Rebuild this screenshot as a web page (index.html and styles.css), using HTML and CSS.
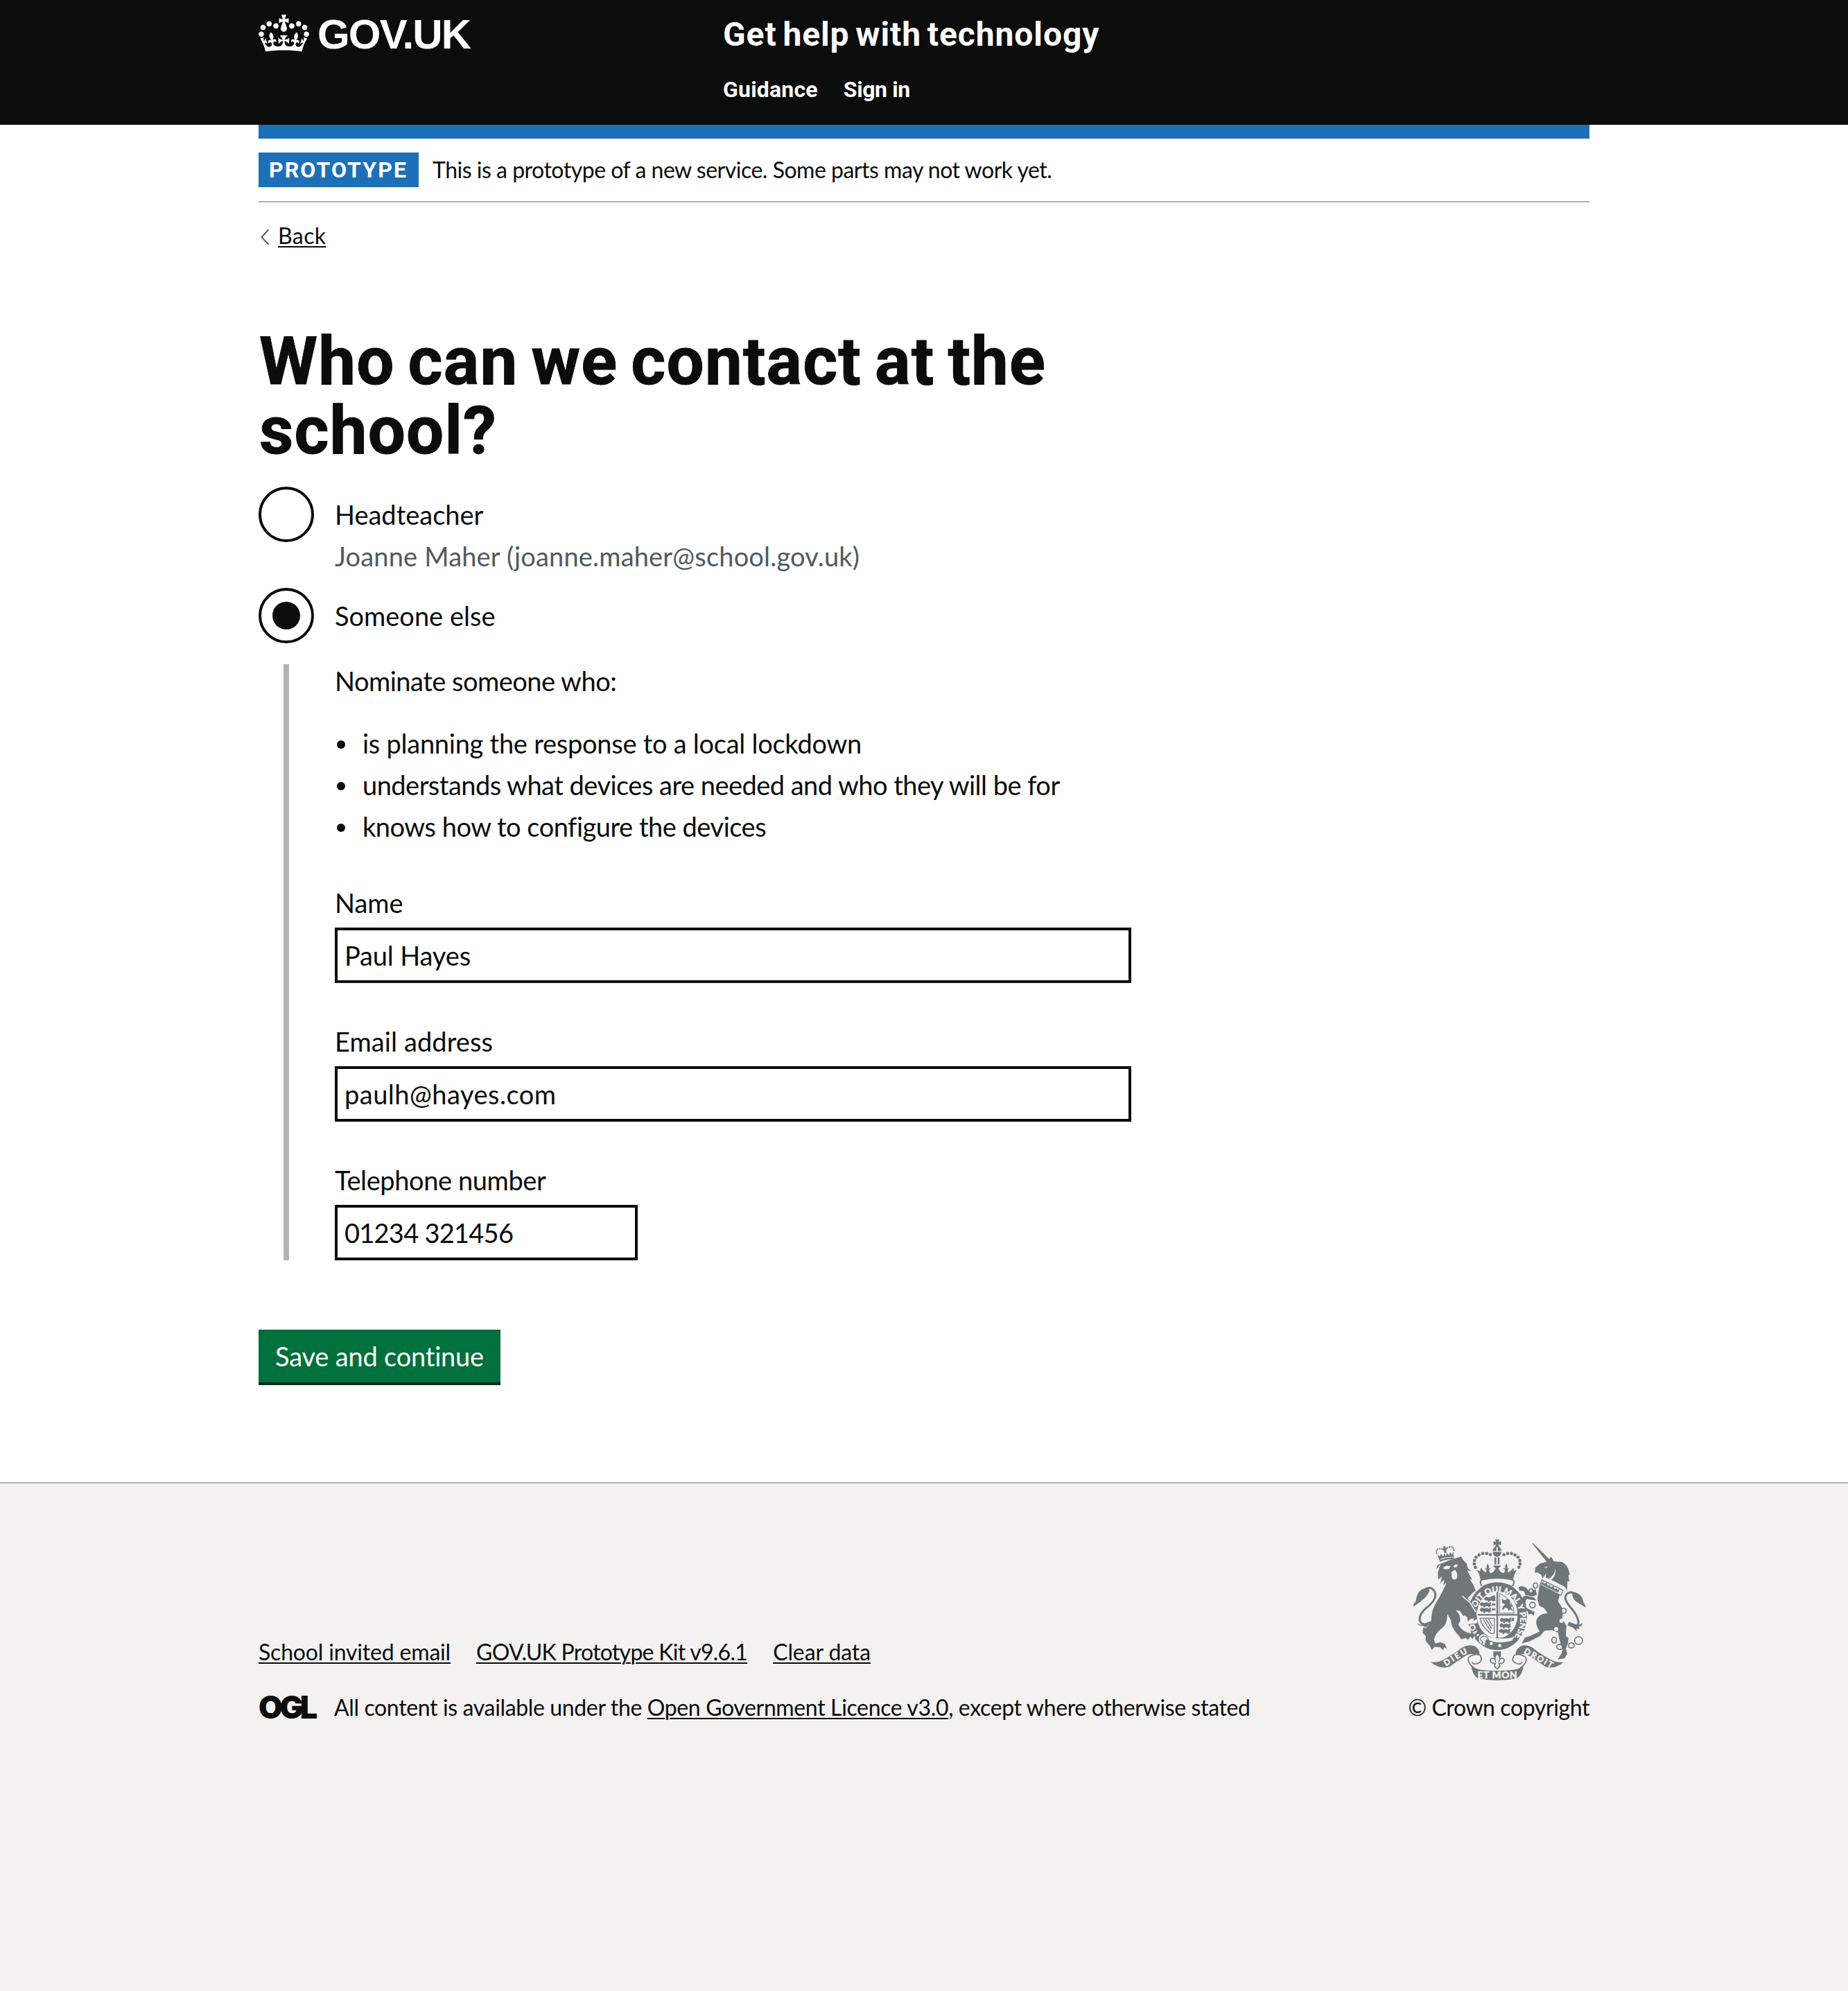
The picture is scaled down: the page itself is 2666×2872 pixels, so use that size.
FILE: index.html
```html
<!DOCTYPE html>
<html lang="en">
<head>
<meta charset="utf-8">
<title>Who can we contact at the school? - Get help with technology</title>
<link rel="stylesheet" href="styles.css">
</head>
<body>
<header class="header">
  <div class="container header-inner">
    <a class="logo" href="#">
      <svg class="logo-crown" viewBox="0 0 132 97" aria-hidden="true"><path fill="currentColor" fill-rule="evenodd" d="M25 30.2c3.5 1.5 7.7-.2 9.1-3.7 1.5-3.6-.2-7.8-3.9-9.2-3.6-1.4-7.6.3-9.1 3.9-1.4 3.5.3 7.5 3.9 9zM9 39.5c3.6 1.5 7.8-.2 9.2-3.7 1.5-3.6-.2-7.8-3.9-9.1-3.6-1.5-7.6.2-9.1 3.8-1.4 3.5.3 7.5 3.8 9zM4.4 57.2c3.5 1.5 7.7-.2 9.1-3.8 1.5-3.6-.2-7.7-3.9-9.1-3.5-1.5-7.6.3-9.1 3.8-1.4 3.5.3 7.6 3.9 9.1zm38.3-21.4c3.5 1.5 7.7-.2 9.1-3.8 1.5-3.6-.2-7.7-3.9-9.1-3.6-1.5-7.6.3-9.1 3.8-1.3 3.6.4 7.7 3.9 9.1zm64.4-5.6c-3.6 1.5-7.8-.2-9.1-3.7-1.5-3.6.2-7.8 3.8-9.2 3.6-1.4 7.7.3 9.2 3.9 1.3 3.5-.4 7.5-3.9 9zm15.9 9.3c-3.6 1.5-7.7-.2-9.1-3.7-1.5-3.6.2-7.8 3.7-9.1 3.6-1.5 7.7.2 9.2 3.8 1.5 3.5-.3 7.5-3.8 9zm4.7 17.7c-3.6 1.5-7.8-.2-9.2-3.8-1.5-3.6.2-7.7 3.9-9.1 3.6-1.5 7.7.3 9.2 3.8 1.3 3.5-.4 7.6-3.9 9.1zM89.3 35.8c-3.6 1.5-7.8-.2-9.2-3.8-1.4-3.6.2-7.7 3.9-9.1 3.6-1.5 7.7.3 9.2 3.8 1.4 3.6-.3 7.7-3.9 9.1zM69.7 17.7l8.9 4.7V9.3l-8.9 2.8c-.2-.3-.5-.6-.9-.9L72.4 0H59.6l3.5 11.2c-.3.3-.6.5-.9.9l-8.8-2.8v13.1l8.8-4.7c.3.3.6.7.9.9l-5 15.4v.1c-.2.8-.4 1.6-.4 2.4 0 4.1 3.1 7.5 7 8.1h.2c.3 0 .7.1 1 .1.4 0 .7 0 1-.1h.2c4-.6 7.1-4.1 7.1-8.1 0-.8-.1-1.7-.4-2.4V34l-5.1-15.4c.4-.2.7-.6 1-.9zM66 92.8c16.9 0 32.8 1.1 47.1 3.2 4-16.9 8.9-26.7 14-33.5l-9.6-3.4c1 4.9 1.1 7.2 0 10.2-1.5-1.4-3-4.3-4.2-8.7L108.6 76c2.8-2 5-3.2 7.5-3.3-4.4 9.4-10 11.9-13.6 11.2-4.3-.8-6.3-4.6-5.6-7.9 1-4.7 5.7-5.9 8-.5 4.3-8.7-3-11.4-7.6-8.8 7.1-7.2 7.9-13.5 2.1-21.1-8 6.1-8.1 12.3-4.5 20.8-4.7-5.4-12.1-2.5-9.5 6.2 3.4-5.2 7.9-2 7.2 3.1-.6 4.3-6.4 7.8-13.5 7.2-10.3-.9-10.9-8-11.2-13.8 2.5-.5 7.1 1.8 11 7.3L80.2 60c-4.1 4.4-8 5.3-12.3 5.4 1.4-4.4 8-11.6 8-11.6H55.5s6.4 7.2 7.9 11.6c-4.2-.1-8-1-12.3-5.4l1.4 16.4c3.9-5.5 8.5-7.7 10.9-7.3-.3 5.8-.9 12.8-11.1 13.8-7.2.6-12.9-2.9-13.5-7.2-.7-5 3.8-8.3 7.1-3.1 2.7-8.7-4.6-11.6-9.4-6.2 3.7-8.5 3.6-14.7-4.6-20.8-5.8 7.6-5 13.9 2.2 21.1-4.7-2.6-11.9.1-7.7 8.8 2.3-5.5 7.1-4.2 8.1.5.7 3.3-1.3 7.1-5.7 7.9-3.5.7-9-1.8-13.5-11.2 2.5.1 4.7 1.3 7.5 3.3l-4.7-15.4c-1.2 4.4-2.7 7.2-4.3 8.7-1.1-3-.9-5.3 0-10.2l-9.5 3.4c5 6.9 9.9 16.7 14 33.5 14.8-2.1 30.8-3.2 47.7-3.2z"/></svg>
      <span class="logo-text">GOV.UK</span>
    </a>
    <div class="header-content">
      <a class="service-name" href="#">Get help with technology</a>
      <nav class="nav">
        <a class="nav-guidance" href="#">Guidance</a>
        <a class="nav-signin" href="#">Sign in</a>
      </nav>
    </div>
  </div>
</header>

<div class="container">
  <div class="blue-bar"></div>
  <div class="phase">
    <strong class="tag">Prototype</strong>
    <span class="phase-text">This is a prototype of a new service. Some parts may not work yet.</span>
  </div>
  <a class="back" href="#">
    <svg class="back-arrow" viewBox="0 0 16 24" aria-hidden="true"><path d="M14.500 1.200 4.500 12l10 10.800" fill="none" stroke="#505a5f" stroke-width="1.900"/></svg>
    <span class="back-text">Back</span>
  </a>

  <main class="main">
    <h1 class="title">Who can we contact at the school?</h1>

    <div class="option option-first">
      <span class="radio"></span>
      <div class="option-body">
        <span class="label ls-head">Headteacher</span>
        <span class="hint">Joanne Maher (joanne.maher@school.gov.uk)</span>
      </div>
    </div>
    <div class="option">
      <span class="radio radio-checked"></span>
      <div class="option-body"><span class="label ls-some">Someone else</span></div>
    </div>

    <div class="conditional">
      <p class="intro">Nominate someone who:</p>
      <ul class="list">
        <li class="ls-plan">is planning the response to a local lockdown</li>
        <li class="ls-under">understands what devices are needed and who they will be for</li>
        <li class="ls-knows">knows how to configure the devices</li>
      </ul>
      <div class="field">
        <label class="label" for="name">Name</label>
        <input class="input ls-paul" id="name" type="text" value="Paul Hayes">
      </div>
      <div class="field">
        <label class="label ls-email" for="email">Email address</label>
        <input class="input ls-paulh" id="email" type="text" value="paulh@hayes.com">
      </div>
      <div class="field">
        <label class="label ls-tel" for="tel">Telephone number</label>
        <input class="input input-short ls-num" id="tel" type="text" value="01234 321456">
      </div>
    </div>

    <button class="button" type="button">Save and continue</button>
  </main>
</div>

<footer class="footer">
  <div class="container footer-inner">
    <div class="footer-meta">
      <div class="footer-links">
        <a class="ls-school" href="#">School invited email</a>
        <a class="ls-kit" href="#">GOV.UK Prototype Kit v9.6.1</a>
        <a class="ls-clear" href="#">Clear data</a>
      </div>
      <div class="licence">
        <span class="ogl">OGL</span>
        <span class="licence-text">All content is available under the <a href="#">Open Government Licence v3.0</a>, except where otherwise stated</span>
      </div>
    </div>
    <div class="crown-copyright">
      <svg class="crest" viewBox="54 58 750 614" aria-hidden="true">
        <defs>
          <path id="garter" d="M346 482A100 115 0 1 1 494 482"/>
          <g id="charge"><path d="M0 8l9-6 8 4 12-3 10 4 5-6 5 3-3 8 5 8-7-1-4 6-7-6-9 1-5 6-5-1 2-7-8 2-8-5z"/></g>
        </defs>
        <!-- royal crown -->
        <g class="ink">
          <path d="M410 60h20l-5 11 11-4v18l-11-4 5 12h-20l5-12-11 4V67l11 4zM400 110q1-16 16-18v18zM422 92q15 2 16 18h-16zM400 114h38q-2 20-19 22-17-2-19-22zM408 138h8v30h-8zm14 0h8v30h-8z"/>
          <path d="M330 192l16 6 2-16 10 12 12 10q8-12-4-18 6-4 8 2-2-14 4-24 8 10 5 24 4-6 9-1-12 4-4 18 12 2 20-10l-5-22h32l-5 22q8 12 20 10 8-14-4-18 5-5 9 1-3-14 5-24 6 10 4 24 2-6 8-2-12 6-4 18l12-10 10-12 2 16 14-6q-14 20-18 46-74-18-140 0-4-28-18-46z"/>
          <circle cx="390" cy="126" r="7"/><circle cx="374" cy="121" r="7"/><circle cx="357" cy="121" r="7"/><circle cx="341" cy="127" r="7"/><circle cx="328" cy="137" r="7"/><circle cx="321" cy="151" r="7"/><circle cx="320" cy="166" r="7"/><circle cx="325" cy="181" r="7"/>
          <circle cx="449" cy="126" r="7"/><circle cx="465" cy="121" r="7"/><circle cx="482" cy="121" r="7"/><circle cx="497" cy="127" r="7"/><circle cx="510" cy="137" r="7"/><circle cx="518" cy="151" r="7"/><circle cx="519" cy="166" r="7"/><circle cx="514" cy="181" r="7"/>
        </g>
        <path class="paper" d="M402 176l12 10-12 12zM436 176l-12 10 12 12z"/>
        <!-- garter and shield -->
        <ellipse class="ink" cx="420" cy="392" rx="129" ry="148"/>
        <path d="M352 262q-12-24 4-28 64-14 128 0 16 4 2 28-66-26-134 0z" fill="#f3f2f1"/>
        <path class="line" d="M352 262q-12-24 4-28 64-14 128 0 16 4 2 28" stroke-width="6"/>
        <path class="ink" d="M356 262q64-32 128 0l-10 8h-108z"/>
        <ellipse class="paper" cx="420" cy="387" rx="90" ry="104"/>
        <path class="line" d="M420 285v205M330 387h180" stroke-width="7"/>
        <ellipse class="line" cx="420" cy="387" rx="90" ry="104" stroke-width="3"/>
        <g class="ink">
          <use href="#charge" x="364" y="306"/><use href="#charge" x="345" y="330"/><use href="#charge" x="345" y="354"/>
          <use href="#charge" x="432" y="398"/><use href="#charge" x="430" y="422"/><use href="#charge" x="428" y="446"/>
          <path d="M390 308l20-6v14zM396 338h16v8h-16zm0 22h16v8h-16zM482 400h12l-2 14h-10zM412 486h28v10h-28z"/>
          <path d="M440 318l14 6 10-8 12 8-2 14 12 8-6 10 10 12-14-4-6 6-6-12-12-2-4 10-8-4 6-12 8-8-12-6z"/>
        </g>
        <path class="line" d="M429 294v86h64q0-56-64-86" stroke-width="3"/>
        <path class="line" d="M345 402h62v64q-10 8-22-4-36-28-40-60zM358 406l34 52M370 404l26 44M382 404l18 34" stroke-width="4"/>
        <text class="motto" font-size="36"><textPath href="#garter" startOffset="6" textLength="498">HONI SOIT QUI MAL Y PENSE</textPath></text>
        <path class="paper" d="M343 482q14-20 32-4 14 12 80 12 22 0 40-10l-10 18q-40 20-104 4-8 26-26 18l-8-8q-12-16-4-30z"/>
        <path class="ink" d="M372 492q48 26 112 8l-16 26q-46 26-104-4z"/>
        <path class="line" d="M350 486q14-14 28 2 12 14-6 32-14 4-20-6 8-10 0-14-10-4-2-14z" stroke-width="4"/>
        <circle class="paper" cx="394" cy="512" r="7"/><circle class="paper" cx="431" cy="521" r="7"/>
        <!-- lion -->
        <path class="paper" d="M262 300l60 50 14 40-4 34-40 4-50-58z"/>
        <path class="ink" d="M154 190l8-20 22-8 28-12 52-16 8 16 15 14 5 20 15 13-18-3 12 22 10 18-10-2 12 20 14 30-12 8-24 26 34 40 4 26 4 24-16 8 2-12-16 4-10 10-4-18-8-8-8 2-16-22-18-3q22 18 20 46-4 8-8 16 16 32 54 39l6-10 4 10 14 4 4 12-14-4-6 14-8-12-12 14-10-8-20 6-8-14-14-16q-22-26-22-52l-16-30q2 46-26 66-24 18-32 46l6 18 22-6 20 8 9 22-12-8-6 12-12-12-24-2-12 14-8-16-10-12-10-14 2-18-14-14 2-24 10 4 26-26q-4-48 24-92 28-46 42-82l-14 14 4-26-18 16 8-30-16 14-2-30 12-36z"/>
        <path class="paper" d="M184 184l14-10 20 2-8 12-16 2zM228 176l12-8 10 2-6 10-10 2zM222 200l16-8 6 12q6 16-2 28-12 6-18-4-6-12 2-20l-6 2z"/>
        <path d="M268 306l34 28 24 40" fill="none" stroke="#f3f2f1" stroke-width="5"/>
        <path class="line" d="M134 418q-40 22-50-4-6-30 34-62 44-36 30-66-18-28-46-6" stroke-width="9"/>
        <path class="ink" d="M54 352q2-16 12-22 4-42 28-54 26-12 32 4-4 20-28 40-16 16-44 32zM70 424q24 14 46-2l18-8-6 14-24 16q4-10-8-8-16 0-26-12z"/>
        <g transform="rotate(-10 196 124)">
          <path class="ink" d="M160 118l10 12 6-12 8 14 6-12 6 12 6-12 8 12 6-14 6 12 10-12-6 34q-30-8-60 0zM191 90h10v8h6v6h-6v14h-10v-14h-6v-6h6z"/>
          <path class="line" d="M158 116q-2-22 16-20 14 0 20 12M234 116q2-22-16-20-14 0-20 12" stroke-width="6" stroke-dasharray="6 3"/>
          <path d="M170 142q26-6 54 0" fill="none" stroke="#f3f2f1" stroke-width="3"/>
        </g>
        <!-- unicorn -->
        <path class="ink" d="M570 75l6 2 74 72-12 12zM583 204l2-20 20-19 28-8 8-8 14-14 10 20 36 2 18 14 10 18 6 24-6 2 4 28-8-3-2 42-10-16-44-24-40-18 4-18-16 22-6-14-12-8-4-2z"/>
        <path class="paper" d="M622 182l18-4-6 6zM636 236q34-18 36-50 6 36-26 56z"/>
        <path class="ink" d="M604 258l88 40-8 30 16 26 4 30-2 20 18 30-2 46 12 8-4 26-8 20 6 24-12 18-30 6 14-22 8-20-14-44-6-32-26-10-32 2-22 24-42 22-36 10 14-26 20-6 44-20-6-10q-16-30-4-48 12-20 44-22l-14-22-22-10-8-30z"/>
        <path class="ink" d="M592 300l-18 8-30-6-10-18-18-2-4-14 12-6 20 6 20 24 22-18zM590 324l-22-2-20-4-6 14 4 24 20 12 16 6-4 16-10-8-12 4-4-14-12-12-12-28 2-22 14-6 36 8z"/>
        <path d="M614 235l92 46-10 22-90-46z" fill="#f3f2f1" stroke="#6f777b" stroke-width="4"/>
        <path class="ink" transform="translate(611 250) rotate(26.500)" d="M0 0l4-12 5 8 6-2 5-10 5 10 7 2 5-8 5 8 6-2 5-10 5 10 7 2 5-8 5 8 7-10 2 14v4H0z"/>
        <circle class="paper" cx="699" cy="413" r="9"/><circle class="paper" cx="676" cy="449" r="9"/>
        <g class="line" stroke-width="5">
          <ellipse cx="586" cy="260" rx="10" ry="11"/><ellipse cx="567" cy="284" rx="9" ry="10"/><circle cx="573" cy="345" r="12"/><circle cx="708" cy="370" r="11"/><ellipse cx="667" cy="497" rx="10" ry="13"/><ellipse cx="692" cy="526" rx="14" ry="11"/><ellipse cx="742" cy="520" rx="13" ry="11"/><circle cx="773" cy="499" r="17"/>
        </g>
        <path class="line" d="M736 434q40 10 36-20-4-26-36-62-32-36-14-56 18-14 38 2" stroke-width="9"/>
        <path class="ink" d="M804 356q-2-16-10-22-2-30-28-42-16-6-20 6 0 20 20 34 16 10 38 24zM790 422q-14 12-26 8l-32-12-8 14 24 10 18 18-2-14 14 4-4-12 12-2z"/>
        <!-- fleur-de-lis badge and motto scroll -->
        <path class="ink" d="M403 546h33v24h-33z"/>
        <path d="M420 556q18 18 6 36 6-22 22-14 8 10-8 20h-12l4 12-12 12-12-12 4-12h-12q-16-10-8-20 16-8 22 14-12-18 6-36z" fill="#f3f2f1" stroke="#6f777b" stroke-width="5"/>
        <path class="ink" d="M130 592q34 4 60-12 50-28 76-50 30-18 58-6 22 14 18 40l-30-6q-20-2-40 14-34 22-58 40-40 14-84-20z"/>
        <path class="ink" d="M709 592q-34 4-60-12-50-28-76-50-30-18-52-6-22 14-22 40l30-6q20-2 40 14 34 22 58 40 40 14 82-20z"/>
        <path class="line" d="M326 560q-34 4-32 24 4 20 26 34M350 572q6 20-20 28-14 4-20-8M342 560q8 4 8 14M514 560q34 4 32 24-4 20-26 34M488 572q-6 20 20 28 14 4 20-8M498 560q-8 4-8 14" stroke-width="5"/>
        <path class="ink" d="M306 606q14 16 44 20 70 8 140 0 32-4 44-20-4 42-28 56-86 20-172 0-22-14-28-56z"/>
        <text class="motto" font-size="36" textLength="112" transform="translate(197 611) rotate(-32)">DIEU</text>
        <text class="motto" font-size="36" textLength="138" transform="translate(533 552) rotate(29)">DROIT</text>
        <text class="motto" font-size="41" x="334" y="662" textLength="172">ET MON</text>
      </svg>
      <span class="copyright">© Crown copyright</span>
    </div>
  </div>
</footer>
</body>
</html>
```
FILE: styles.css
```css
* { box-sizing: border-box; }
body {
  margin: 0;
  background: #fff;
  color: #0b0c0c;
  font-family: Lato, "Noto Sans", sans-serif;
  font-size: 38px;
  line-height: 50px;
  font-variant-ligatures: none;
}
a { color: inherit; text-decoration: none; }
.container { width: 1920px; margin: 0 auto; }

/* Header */
.header { height: 180px; background: #0b0c0c; color: #fff; }
.header-inner { display: flex; align-items: flex-start; }
.logo { width: 670px; padding-top: 21px; display: flex; align-items: flex-start; gap: 12px; }
.logo-crown { width: 73px; height: 54px; display: block; }
.logo-text {
  font-family: "Liberation Sans", Arial, sans-serif;
  font-weight: 700;
  font-size: 60px;
  line-height: 58px;
  letter-spacing: -1.8px;
}
.header-content {
  display: flex;
  flex-direction: column;
  gap: 34px;
  padding-top: 25px;
  font-family: Roboto, sans-serif;
  font-weight: 700;
}
.service-name { font-size: 48px; line-height: 50px; letter-spacing: .9px; word-spacing: -4px; }
.nav { display: flex; gap: 37px; font-size: 32px; line-height: 40px; }
.nav-guidance { letter-spacing: .2px; }
.nav-signin { letter-spacing: -.4px; }

/* Phase banner */
.blue-bar { height: 20px; background: #1d70b8; }
.phase {
  display: flex;
  align-items: center;
  gap: 20px;
  padding: 20px 0;
  border-bottom: 2px solid #b1b4b6;
}
.tag {
  width: 231px;
  height: 50px;
  padding-left: 15px;
  background: #1d70b8;
  color: #fff;
  font-family: Roboto, sans-serif;
  font-size: 32px;
  font-weight: 700;
  letter-spacing: 2.1px;
  text-transform: uppercase;
}
.phase-text { font-size: 32px; line-height: 40px; letter-spacing: -.49px; padding-bottom: 1px; }

.back { display: flex; width: max-content; margin-top: 28px; font-size: 32px; line-height: 40px; }
.back-arrow { width: 16px; height: 24px; margin: 10px 12px 0 0; }
.back-text { letter-spacing: .4px; }
.back-text, .footer a {
  text-decoration: underline;
  text-decoration-thickness: 2px;
  text-underline-offset: 3px;
}

/* Question */
.main { width: 1259px; margin-top: 111px; }
.title {
  margin: 0 0 31px 1px;
  font-family: Roboto, sans-serif;
  font-size: 96px;
  font-weight: 700;
  line-height: 100px;
  letter-spacing: 1.2px;
  word-spacing: -6px;
  -webkit-text-stroke: 1px #0b0c0c;
}
.option { display: flex; gap: 30px; }
.option-first { margin-bottom: 21px; }
.option-body { display: flex; flex-direction: column; gap: 10px; padding-top: 15px; }
.radio {
  display: grid;
  place-items: center;
  width: 80px;
  height: 80px;
  border: 4px solid #0b0c0c;
  border-radius: 50%;
}
.radio-checked::before {
  content: "";
  width: 40px;
  height: 40px;
  border-radius: 50%;
  background: #0b0c0c;
}
.hint { color: #505a5f; letter-spacing: .18px; }
.label { display: block; }

.conditional {
  margin: 30px 0 0 36px;
  padding: 1px 0 0 66px;
  border-left: 8px solid #b1b4b6;
}
.intro { margin: 0 0 37px; line-height: 46px; letter-spacing: -.5px; }
.list { margin: 0 0 55px; padding: 0; list-style: none; line-height: 60px; }
.list li { display: flex; gap: 25px; }
.list li::before {
  content: "";
  width: 12px;
  height: 12px;
  margin: 26px 0 0 3px;
  border-radius: 50%;
  background: #0b0c0c;
}
.field + .field { margin-top: 59px; }
.input {
  display: block;
  width: 1149px;
  height: 80px;
  margin: 11px 0 0;
  padding: 0 10px;
  border: 4px solid #0b0c0c;
  border-radius: 0;
  background: #fff;
  color: #0b0c0c;
  font: inherit;
}
.input-short { width: 437px; }
.button {
  display: block;
  width: 349px;
  height: 76px;
  margin: 100px 0 144px;
  padding: 0;
  border: 0;
  background: #00703c;
  box-shadow: 0 4px 0 #002d18;
  color: #fff;
  font: inherit;
  letter-spacing: -.2px;
}

/* Letter fitting */
.ls-head, .ls-some { letter-spacing: 0; }
.ls-plan { letter-spacing: -.26px; }
.ls-under { letter-spacing: -.52px; }
.ls-knows { letter-spacing: -.49px; }
.ls-paul { letter-spacing: -.14px; }
.ls-email { letter-spacing: .1px; }
.ls-paulh { letter-spacing: .5px; }
.ls-tel { letter-spacing: -.4px; }
.ls-num { letter-spacing: -.75px; }
.ls-school { letter-spacing: -.18px; }
.ls-kit { letter-spacing: -.72px; }
.ls-clear { letter-spacing: -.1px; }

/* Footer */
.footer {
  height: 734px;
  padding-top: 80px;
  border-top: 2px solid #b1b4b6;
  background: #f3f2f1;
  font-size: 32px;
  line-height: 40px;
}
.footer-inner { display: flex; justify-content: space-between; align-items: flex-end; }
.footer-meta { display: flex; flex-direction: column; gap: 40px; }
.footer-links { display: flex; gap: 37px; }
.licence { display: flex; }
.ogl {
  width: 109px;
  font-family: Inter, sans-serif;
  font-weight: 900;
  font-size: 45px;
  letter-spacing: -4.5px;
}
.licence-text { letter-spacing: -.36px; }
.crown-copyright { display: flex; flex-direction: column; align-items: flex-end; gap: 19px; }
.crest { width: 250px; height: 204px; margin-right: 5px; display: block; }
.copyright { letter-spacing: -.4px; }
.ink { fill: #6f777b; }
.paper { fill: #f3f2f1; }
.line { fill: none; stroke: #6f777b; }
.motto { fill: #f3f2f1; stroke: #f3f2f1; stroke-width: 1.2px; font-family: Lato, sans-serif; font-weight: 900; }
```
